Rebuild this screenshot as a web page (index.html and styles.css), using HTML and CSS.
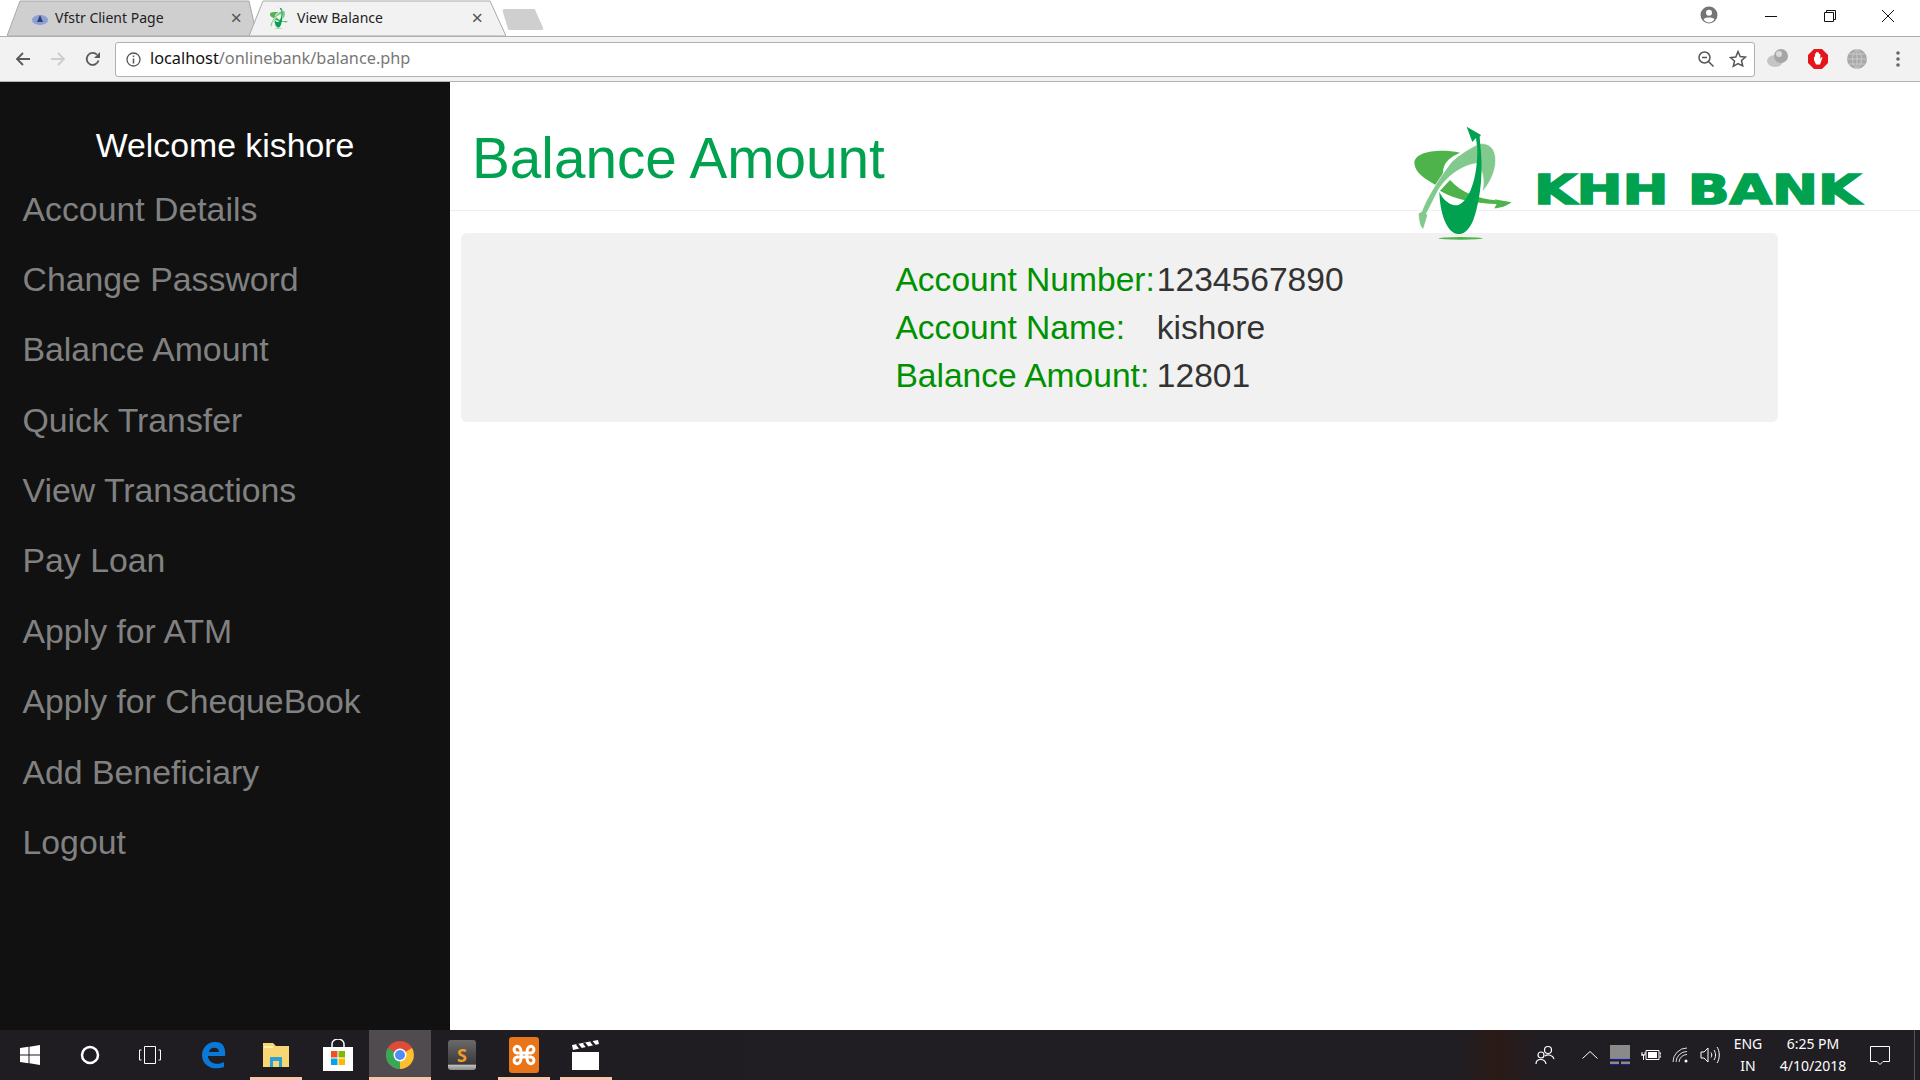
FILE: index.html
```html
<!DOCTYPE html>
<html lang="en">
<head>
<meta charset="utf-8">
<title>View Balance</title>
<link rel="stylesheet" href="styles.css">
</head>
<body>
<svg class="defs" width="0" height="0" aria-hidden="true">
  <defs>
    <symbol id="khh-mark" viewBox="15 15 320 350">
      <path fill="#4db34a" d="M165 98C100 85 28 95 28 130C30 160 65 180 92 195L112 170C118 150 105 125 165 98Z"/>
      <path fill="#4db34a" d="M135 180C170 220 220 235 272 241L268 238L320 247C305 258 285 265 268 265L275 252C220 250 150 240 105 212Z"/>
      <path fill="#81c98d" stroke="#fff" stroke-width="2" d="M220 72C250 65 272 85 272 120C272 160 250 195 232 215C240 180 232 150 218 130C170 135 125 170 100 210L64 282L68 285L55 328C48 322 42 315 40 280L50 275C65 235 92 190 140 125C165 102 195 85 220 72Z"/>
      <path fill="#00a14f" d="M225 70C235 140 230 230 205 300C190 335 175 342 160 342C125 340 105 280 103 215C115 245 145 260 160 255C200 240 222 150 216 66Z"/>
      <path fill="#00a14f" d="M185 20L228 45L224 50L226 78L216 78L213 54L202 66Z"/>
      <ellipse fill="#4db34a" cx="167" cy="355" rx="67" ry="4"/>
    </symbol>
  </defs>
</svg>

<header class="browser">
  <div class="tabstrip">
    <div class="tab tab-back">
      <svg class="tab-shape" viewBox="0 0 250 36" preserveAspectRatio="none"><path d="M0 36L13 1H242L250 36Z" fill="#cfcfcf" stroke="#a8a8a8"/></svg>
      <svg class="favicon" viewBox="0 0 20 20"><ellipse cx="10" cy="12" rx="8" ry="5" fill="#8b9fd6"/><path d="M10 7l3 7H7z" fill="#33406e"/></svg>
      <span class="tab-title">Vfstr Client Page</span>
      <span class="tab-close">×</span>
    </div>
    <div class="tab tab-front">
      <svg class="tab-shape" viewBox="0 0 257 36" preserveAspectRatio="none"><path d="M0 36L14 1H241L257 36Z" fill="#f2f2f2" stroke="#a8a8a8"/></svg>
      <svg class="favicon"><use href="#khh-mark"/></svg>
      <span class="tab-title">View Balance</span>
      <span class="tab-close">×</span>
    </div>
    <div class="newtab"></div>
    <div class="winctl">
      <svg class="profile" width="18" height="18" viewBox="0 0 18 18"><circle cx="9" cy="9" r="8.500" fill="#757575"/><circle cx="9" cy="6.800" r="3" fill="#fff"/><path d="M3.600 13.500c1-2.600 9.800-2.600 10.800 0-1.500 2-3.300 3-5.400 3s-3.900-1-5.400-3z" fill="#fff"/></svg>
      <div class="winbtns">
        <svg width="12" height="12" viewBox="0 0 12 12"><path d="M0 6.500h12" stroke="#111" fill="none"/></svg>
        <svg width="12" height="12" viewBox="0 0 12 12"><path d="M.5 2.500h9v9h-9zM2.500 2.500v-2h9v9h-2" stroke="#111" fill="none"/></svg>
        <svg width="12" height="12" viewBox="0 0 12 12"><path d="M0 0l12 12M12 0L0 12" stroke="#111" fill="none"/></svg>
      </div>
    </div>
  </div>
  <div class="toolbar">
    <div class="nav">
      <svg width="16" height="16" viewBox="0 0 16 16"><path d="M15 8H2M8 2L2 8l6 6" stroke="#5a5a5a" stroke-width="1.800" fill="none"/></svg>
      <svg width="16" height="16" viewBox="0 0 16 16"><path d="M1 8h13M8 2l6 6-6 6" stroke="#cdcdcd" stroke-width="1.800" fill="none"/></svg>
      <svg width="16" height="16" viewBox="0 0 16 16"><path d="M13.500 9.500A6 6 0 1 1 12 3.700" stroke="#5a5a5a" stroke-width="1.800" fill="none"/><path d="M15 1v6H9z" fill="#5a5a5a"/></svg>
    </div>
    <div class="omnibox">
      <svg class="info" width="15" height="15" viewBox="0 0 15 15"><circle cx="7.500" cy="7.500" r="6.500" stroke="#555" stroke-width="1.300" fill="none"/><path d="M7.500 6.500v5M7.500 3.500v1.600" stroke="#555" stroke-width="1.500"/></svg>
      <span class="url"><span class="host">localhost</span>/onlinebank/balance.php</span>
      <svg class="omni-icon" width="18" height="18" viewBox="0 0 18 18"><circle cx="7.500" cy="7.500" r="5.500" stroke="#555" stroke-width="1.500" fill="none"/><path d="M5 7.500h5M11.500 11.500l5 5" stroke="#555" stroke-width="1.500"/></svg>
      <svg class="omni-icon" width="18" height="18" viewBox="0 0 18 18"><path d="M9 1.500l2.200 5 5.300.5-4 3.500 1.200 5.300L9 13.500l-4.700 2.800 1.200-5.300-4-3.500 5.300-.5z" stroke="#555" stroke-width="1.500" fill="none"/></svg>
    </div>
    <div class="extensions">
      <svg width="22" height="20" viewBox="0 0 22 20"><ellipse cx="8" cy="12" rx="8" ry="6" fill="#c4c4c4"/><circle cx="14" cy="7" r="7" fill="#a6a6a6"/><circle cx="12" cy="5" r="3" fill="#d9d9d9"/></svg>
      <svg width="20" height="20" viewBox="0 0 20 20"><path d="M6 0h8l6 6v8l-6 6H6l-6-6V6z" fill="#e4151b"/><path d="M6 11V7.500l1 .5V4.500h1.200V8V3h1.400v5V3.500H11V8V5h1.300v5l1.500-2 .7.500-2.500 7H8z" fill="#fff"/></svg>
      <svg width="20" height="20" viewBox="0 0 20 20"><circle cx="10" cy="10" r="10" fill="#a8a8a8"/><path d="M0 10h20M2 5h16M2 15h16M10 0v20M10 0c-6 5-6 15 0 20M10 0c6 5 6 15 0 20" stroke="#d0d0d0" stroke-width=".8" fill="none"/></svg>
      <svg class="dots" width="4" height="16" viewBox="0 0 4 16"><circle cx="2" cy="2" r="1.800" fill="#666"/><circle cx="2" cy="8" r="1.800" fill="#666"/><circle cx="2" cy="14" r="1.800" fill="#666"/></svg>
    </div>
  </div>
</header>

<div class="app">
  <aside class="sidebar">
    <h2 class="welcome">Welcome kishore</h2>
    <nav class="menu">
      <a class="menu-link">Account Details</a>
      <a class="menu-link">Change Password</a>
      <a class="menu-link">Balance Amount</a>
      <a class="menu-link">Quick Transfer</a>
      <a class="menu-link">View Transactions</a>
      <a class="menu-link">Pay Loan</a>
      <a class="menu-link">Apply for ATM</a>
      <a class="menu-link">Apply for ChequeBook</a>
      <a class="menu-link">Add Beneficiary</a>
      <a class="menu-link">Logout</a>
    </nav>
  </aside>
  <main class="content">
    <div class="page-head">
      <h1 class="page-title">Balance Amount</h1>
      <svg class="logo" viewBox="0 0 1530 420" role="img" aria-label="KHH Bank logo">
        <use href="#khh-mark" x="60" y="45" width="320" height="350"/>
        <text class="logo-text" x="432" y="281" textLength="980" lengthAdjust="spacingAndGlyphs">KHH BANK</text>
      </svg>
    </div>
    <section class="panel">
      <div class="details">
        <span class="label">Account Number:</span><span class="value">1234567890</span>
        <span class="label">Account Name:</span><span class="value">kishore</span>
        <span class="label">Balance Amount:</span><span class="value">12801</span>
      </div>
    </section>
  </main>
</div>

<footer class="taskbar">
  <div class="task-left">
    <div class="sys"><svg width="20" height="20" viewBox="0 0 20 20"><path d="M0 3l8.500-1.200v7.700H0zM9.500 1.700L20 0v9.500H9.500zM0 10.500h8.500v7.700L0 17zM9.500 10.500H20V20L9.500 18.300z" fill="#fff"/></svg></div>
    <div class="sys"><svg width="20" height="20" viewBox="0 0 20 20"><circle cx="10" cy="10" r="8" stroke="#fff" stroke-width="2.500" fill="none"/></svg></div>
    <div class="sys"><svg width="24" height="18" viewBox="0 0 24 18"><path d="M6.500.5h11v17h-11zM3.500 4H1.500v10h2M20.500 4h2v10h-2" stroke="#fff" fill="none"/></svg></div>
    <div class="app-btn"><svg width="26" height="28" viewBox="0 0 26 28"><path d="M24 15H7c0 7 9 10 16 6v5c-11 4-22-1-22-12C1 6 8 0 15 1c7 0 10 6 9 14zM8 11h10c0-5-9-6-10 0z" fill="#0a78d7"/></svg></div>
    <div class="app-btn running"><svg width="28" height="26" viewBox="0 0 28 26"><path d="M1 1h10l3 3h13v21H1z" fill="#f7d774"/><path d="M2 4h9v2H2z" fill="#fff2b8"/><path d="M8 25v-10h12v10h-3v-6h-6v6z" fill="#2aa2d8"/></svg></div>
    <div class="app-btn"><svg width="30" height="32" viewBox="0 0 30 32"><path d="M0 8h30v24H0z" fill="#fff"/><path d="M9 8V5a6 5 0 0 1 12 0v3" stroke="#fff" stroke-width="1.500" fill="none"/><path d="M8 12h6.500v6.500H8z" fill="#f25022"/><path d="M15.500 12H22v6.500h-6.500z" fill="#7fba00"/><path d="M8 19.500h6.500V26H8z" fill="#00a4ef"/><path d="M15.500 19.500H22V26h-6.500z" fill="#ffb900"/></svg></div>
    <div class="app-btn active running"><svg width="28" height="28" viewBox="0 0 28 28"><circle cx="14" cy="14" r="14" fill="#dd4b39"/><path d="M14 14l-11 9A14 14 0 0 1 2 7z" fill="#3aa757"/><path d="M14 14l-12 7a14 14 0 0 0 12 7z" fill="#3aa757"/><path d="M14 14v14a14 14 0 0 0 12-21z" fill="#fbc02d"/><circle cx="14" cy="14" r="6.500" fill="#fff"/><circle cx="14" cy="14" r="5" fill="#4e8df5"/></svg></div>
    <div class="app-btn sublime"><span class="sublime-s">S</span></div>
    <div class="app-btn running"><svg width="30" height="36" viewBox="0 0 30 36"><rect width="30" height="36" rx="3" fill="#e8751a"/><path d="M10 10c-5-3-7 5-2 6h14c5-1 3-9-2-6-3 2-3 14 0 16 5 3 7-5 2-6H8c-5 1-3 9 2 6 3-2 3-14 0-16z" stroke="#fff" stroke-width="3" fill="none"/></svg></div>
    <div class="app-btn running"><svg width="28" height="30" viewBox="0 0 28 30"><path d="M0 12h27v18H0z" fill="#fff"/><path d="M0 5l26-5 1 4L1 10z" fill="#fff"/><path d="M5 4l4 5M12 3l4 5M19 1l4 5" stroke="#211e23" stroke-width="2.500"/></svg></div>
  </div>
  <div class="tray">
    <svg class="tray-people" width="20" height="20" viewBox="0 0 20 20"><circle cx="13" cy="5" r="3.500" stroke="#fff" stroke-width="1.200" fill="none"/><circle cx="6" cy="10" r="3" stroke="#fff" stroke-width="1.200" fill="none"/><path d="M1 19c0-6 9-6 10 0M10 11c3-2 8-1 9 3" stroke="#fff" stroke-width="1.200" fill="none"/></svg>
    <svg class="tray-up" width="16" height="8" viewBox="0 0 16 8"><path d="M.5 7.500L8 .5l7.500 7" stroke="#fff" fill="none"/></svg>
    <svg class="tray-laptop" width="20" height="20" viewBox="0 0 20 20"><path d="M0 0h20v14.500H0z" fill="#8a8a8a"/><path d="M0 14.500h20" stroke="#1b1ba8" stroke-width="1.200"/><path d="M0 16.500h9v3H0zM11 16.500h9v3h-9z" fill="#8a8a8a"/><path d="M0 19.500h9M11 19.500h9" stroke="#1b1ba8"/></svg>
    <svg class="tray-batt" width="20" height="12" viewBox="0 0 20 12"><path d="M5 1.500h13v9H5z" stroke="#fff" fill="none"/><path d="M7 3h9v6H7z" fill="#fff"/><path d="M18.500 4h1.500v4h-1.500M0 6h3M1 3v3h3V3M2.500 6v5" stroke="#fff" fill="none"/></svg>
    <svg class="tray-wifi" width="16" height="16" viewBox="0 0 16 16"><path d="M1 15A14 14 0 0 1 15 1M4 15A11 11 0 0 1 15 4.500M7 15a8 8 0 0 1 8-7.500" stroke="#ddd" fill="none"/><circle cx="14" cy="14" r="1.500" fill="#fff"/></svg>
    <svg class="tray-vol" width="20" height="18" viewBox="0 0 20 18"><path d="M1 6h3l4-4v14l-4-4H1zM11 6.500c1 1.500 1 3.500 0 5M14 4c2 3 2 7 0 10M17 1c3 4 3 12 0 16" stroke="#fff" fill="none"/></svg>
    <div class="clock-lang"><span>ENG</span><span>IN</span></div>
    <div class="clock"><span>6:25 PM</span><span>4/10/2018</span></div>
    <svg class="tray-notify" width="20" height="19" viewBox="0 0 20 19"><path d="M.5.500h19v15h-6.500L10 18.500 7 15.500H.5z" stroke="#fff" fill="none"/></svg>
    <div class="show-desktop"></div>
  </div>
</footer>
</body>
</html>
```
FILE: styles.css
```css
* { box-sizing: border-box; }
html, body { margin: 0; height: 100%; }
body {
  width: 1920px;
  height: 1080px;
  overflow: hidden;
  display: flex;
  flex-direction: column;
  background: #fff;
  font-family: "Liberation Sans", Arial, sans-serif;
}
.defs { position: absolute; }

/* browser chrome */
.browser { flex: none; height: 82px; font-family: "Noto Sans", "Open Sans", sans-serif; }
.tabstrip { height: 36px; display: flex; align-items: stretch; padding-left: 7px; background: #fff; }
.tab { position: relative; display: flex; align-items: center; height: 36px; }
.tab-shape { position: absolute; left: 0; top: 0; width: 100%; height: 100%; }
.tab-back { width: 250px; padding: 0 15px 0 23px; }
.tab-front { width: 257px; padding: 0 23px 0 20px; margin-left: -8px; }
.favicon { position: relative; width: 20px; height: 22px; flex: none; }
.tab-title { position: relative; flex: 1; font-size: 14px; line-height: 38px; color: #222; white-space: nowrap; }
.tab-back .tab-title { margin-left: 5px; }
.tab-front .tab-title { margin-left: 8px; }
.tab-close { position: relative; font-size: 20px; line-height: 1; color: #555; }
.newtab {
  width: 42px; height: 21px; margin: 9px 0 0 -4px;
  background: #cfcfcf; border-radius: 3px;
  clip-path: polygon(0 0, 78% 0, 100% 100%, 15% 100%);
}
.winctl { flex: 1; display: flex; align-items: flex-start; justify-content: flex-end; }
.profile { margin: 6px 47px 0 0; }
.winbtns { display: flex; gap: 46px; padding: 10px 26px 0 0; }
.winbtns svg:first-child { margin-right: 1px; }

.toolbar {
  height: 46px;
  display: flex;
  align-items: center;
  background: #f2f2f2;
  border-top: 1px solid #aeaeae;
  border-bottom: 1px solid #b4b4b4;
}
.nav { width: 115px; flex: none; display: flex; gap: 19px; padding-left: 15px; }
.omnibox {
  width: 1640px;
  height: 35px;
  flex: none;
  display: flex;
  align-items: center;
  padding: 0 7px 0 10px;
  background: #fff;
  border: 1px solid #b0b0b0;
  border-radius: 3px;
}
.info { flex: none; }
.url { flex: 1; margin-left: 9px; padding-bottom: 2px; font-size: 16.300px; color: #777; white-space: nowrap; }
.host { color: #111; }
.omni-icon { margin-left: 14px; }
.extensions { flex: 1; display: flex; align-items: center; gap: 19px; padding-left: 12px; }
.dots { margin-left: 10px; }

/* app */
.app { flex: 1; min-height: 0; display: flex; }
.sidebar { width: 450px; flex: none; background: #111; color: #818181; }
.welcome {
  margin: 40px 0 5.500px;
  font-size: 33.800px;
  font-weight: 400;
  line-height: 46px;
  text-align: center;
  color: #fff;
}
.menu { display: flex; flex-direction: column; }
.menu-link { height: 70.400px; line-height: 70.400px; padding-left: 22.500px; font-size: 33.800px; color: #818181; }

.content { flex: 1; position: relative; }
.page-head { height: 129px; padding: 43px 0 0 22px; border-bottom: 1px solid #eee; }
.page-title { margin: 0; font-size: 56.700px; font-weight: 400; line-height: 68px; color: #00a14f; }
.logo { position: absolute; left: 940px; top: 28px; width: 510px; height: 140px; }
.logo-text { font-family: "DejaVu Sans", sans-serif; font-weight: 700; font-size: 125px; fill: #00a14f; stroke: #00a14f; stroke-width: 5px; }
.panel { width: 1317px; height: 189px; margin: 22px 0 0 11px; padding: 23px 0 0; background: #f1f1f1; border-radius: 6px; }
.details { display: grid; grid-template-columns: auto auto; justify-content: center; column-gap: 2px; grid-auto-rows: 48px; align-items: center; font-size: 33.600px; }
.label { color: #009100; }
.value { color: #333; }

/* taskbar */
.taskbar {
  flex: none;
  height: 50px;
  display: flex;
  justify-content: space-between;
  color: #fff;
  background: linear-gradient(90deg, #1f1c22 0, #211e23 76%, #2a1a16 78%, #211e23 80%);
  font-family: "Noto Sans", "Open Sans", sans-serif;
}
.task-left { display: flex; }
.sys { width: 60px; display: flex; align-items: center; justify-content: center; }
.sys + .app-btn { margin-left: 3px; }
.app-btn { position: relative; width: 62px; display: flex; align-items: center; justify-content: center; }
.app-btn.active { background: #4f4b4e; }
.app-btn.running::after { content: ""; position: absolute; left: 5px; right: 5px; bottom: 0; height: 3px; background: #f8c4ae; }
.app-btn.active::after { left: 0; right: 0; }
.sublime-s {
  width: 28px; height: 30px;
  display: flex; align-items: center; justify-content: center;
  border-radius: 3px;
  background: linear-gradient(#6a6a6a, #3a3a3a 80%, #bbb 85%, #888);
  color: #f59a23;
  font-size: 18px;
  font-weight: 700;
}
.tray { display: flex; align-items: center; }
.tray-up { margin-left: 27px; }
.tray-laptop { margin-left: 12px; }
.tray-batt { margin-left: 11px; }
.tray-wifi { margin-left: 11px; }
.tray-vol { margin-left: 12px; }
.clock-lang, .clock { display: flex; flex-direction: column; align-items: center; font-size: 14px; line-height: 22px; }
.clock-lang { margin-left: 10px; width: 36px; }
.clock { margin-left: 11px; width: 72px; }
.tray-notify { margin-left: 21px; }
.show-desktop { width: 1px; height: 50px; margin-left: 24px; margin-right: 5px; background: #555; }
```
